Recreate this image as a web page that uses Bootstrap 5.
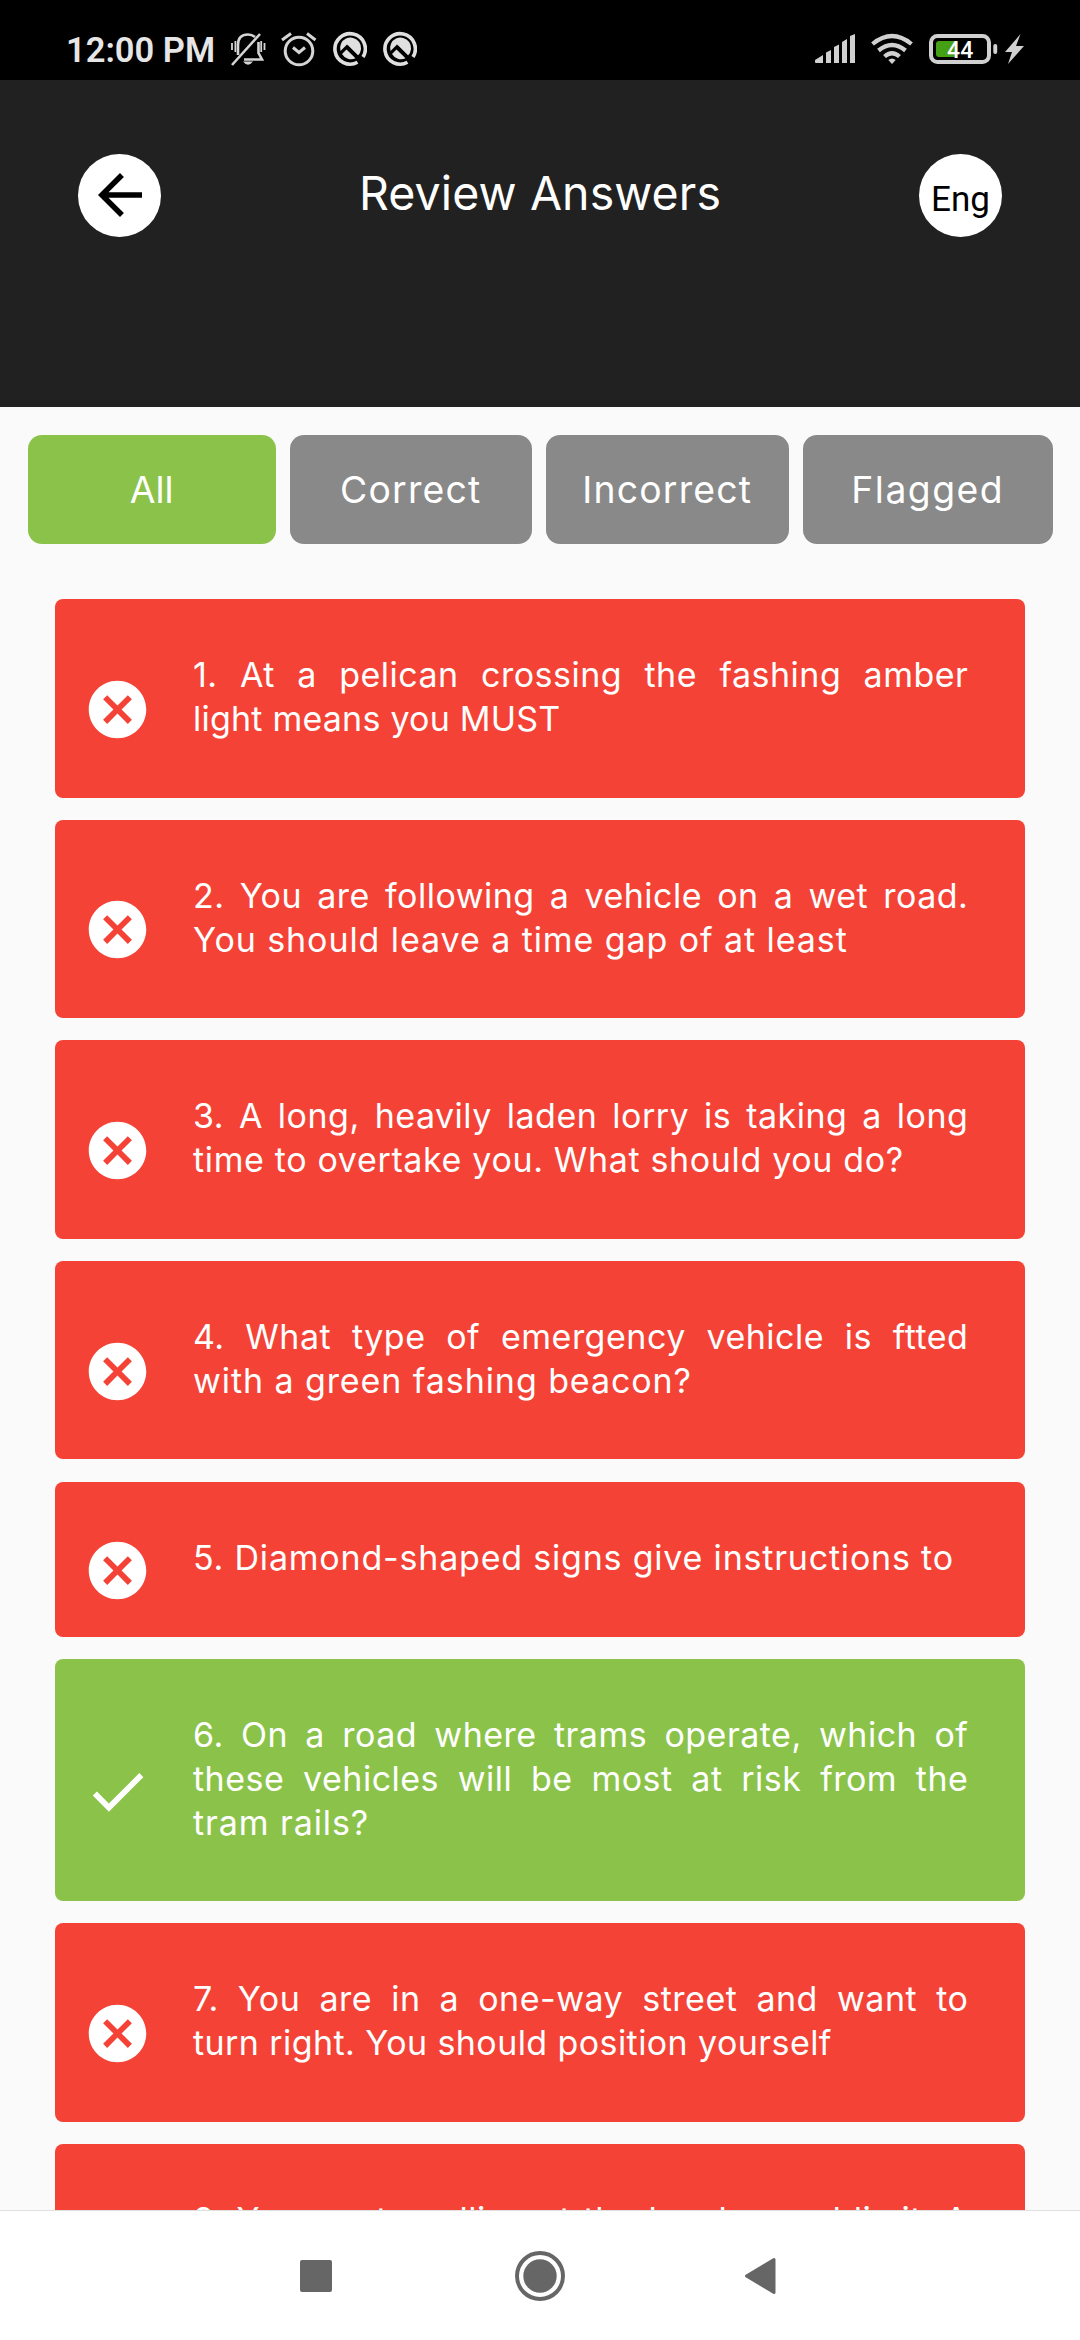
<!DOCTYPE html>
<html lang="en">
<head>
<meta charset="utf-8">
<meta name="viewport" content="width=device-width, initial-scale=1">
<title>Review Answers</title>
<link href="https://cdn.jsdelivr.net/npm/bootstrap@5.3.0/dist/css/bootstrap.min.css" rel="stylesheet">
<style>
  body { background: #fafafa; font-family: Inter, "Open Sans", sans-serif; height: 2340px; overflow: hidden; }
  .status-bar { height: 80px; background: #000; color: #e6e6e6; padding: 18px 56px 0 66px; font-family: Roboto, sans-serif; }
  .status-time { font-size: 34.5px; font-weight: 600; line-height: 40px; margin-top: 1px; width: 148px; white-space: nowrap; }
  .alarm { margin-left: 15px; }
  .app-header { height: 327px; background: #212121; padding: 73.5px 78px 0; }
  .round-btn { width: 83px; height: 83.5px; background: #fff; color: #000; font: 400 35px/83px Roboto, sans-serif; padding: 0; border: 0; }
  .round-btn.lang { padding-top: 4px; }
  .page-title { font-size: 46.5px; font-weight: 400; line-height: 56px; padding-top: 11px; letter-spacing: .1px; }
  .filters { padding: 28px 27px 0 28px; gap: 14px; }
  .filter-btn { width: 243px; height: 109px; border: 0; border-radius: 14px; background: #898989; color: #fff; font-size: 37.3px; line-height: 44px; letter-spacing: 1.2px; padding: 0; }
  .filter-btn:hover { background: #898989; color: #fff; }
  .filter-btn.chosen { background: #8bc34a; width: 248px; letter-spacing: 0; }
  .filter-btn.wide { width: 251px; letter-spacing: 1.5px; }
  .answers { flex: 1 1 0; min-height: 0; overflow: hidden; padding: 55.2px 55.4px 0 55px; gap: 22.1px; }
  .answer { flex: none; border-radius: 8px; background: #f44336; color: #fff; padding: 54px 56.2px 56.5px 28px; gap: 41px; }
  .answer.right { background: #8bc34a; }
  .answer svg { width: 69px; height: 69px; flex: none; margin-bottom: -24.3px; }
  .answer p { flex: 1; font-size: 34px; line-height: 44px; letter-spacing: .65px; }
  .answer span { display: block; white-space: nowrap; }
  .answer .fill, .answer span:not(:last-child) { text-align-last: justify; letter-spacing: .5px; }
  .answer .snug { letter-spacing: .22px; }
  .answer .soft { letter-spacing: .42px; }
  .answer .airy { letter-spacing: .8px; }
  .answer .loose { letter-spacing: .92px; }
  .answer .three-lines { min-height: 132px; }
  .sys-nav { height: 130px; background: #fff; border-top: 1px solid #e0e0e0; padding: 0 304px 0 300px; }
  .home-key { margin-left: 4px; }
</style>
</head>
<body class="d-flex flex-column">
  <div class="status-bar d-flex align-items-center flex-shrink-0">
    <div class="status-time">12:00 PM</div>
    <svg class="ms-3" width="36" height="36" viewBox="230 32 36 36" fill="none" stroke="#d5d5d5" stroke-width="2.6">
      <path d="M238 56V46Q238 35.500 248 35.500Q252 35.500 255 38M258.500 43V54L262 60.500H244" />
      <path d="M232 66 260 35"/><path d="M232 44V51M235.400 42V53M261.200 42V53M264.500 44V51" stroke-width="1.800"/>
      <path d="M243 62.500H253Q248 69 243 62.500Z" fill="#d5d5d5" stroke="none"/>
    </svg>
    <svg class="alarm" width="36" height="36" viewBox="281 32 36 36" fill="none" stroke="#d5d5d5" stroke-width="3">
      <circle cx="299" cy="52" r="13.800"/><path d="M293 48.500 299 53.500 305 48.500M282 41 291 34.500M307 34.500 315.500 41"/>
    </svg>
    <svg class="ms-3" width="34" height="36" viewBox="332 31 34 36" fill="none" stroke="#e0e0e0" stroke-width="3.600">
      <path d="M356.500 62.200A15.200 15.200 0 1 1 362 57"/>
      <path d="M339.500 51 346 44.500 357 55.500A10.500 10.500 0 1 0 339.500 51Z" fill="#e0e0e0" stroke="none"/>
      <path d="M341 54 345.500 49.500 354.500 58.300A10.500 10.500 0 0 1 341 54Z" fill="#e0e0e0" stroke="none"/>
      <path d="M346 46.500 361 61.500" stroke="#000" stroke-width="3"/>
    </svg>
    <svg class="ms-3" width="34" height="36" viewBox="332 31 34 36" fill="none" stroke="#e0e0e0" stroke-width="3.600">
      <path d="M356.500 62.200A15.200 15.200 0 1 1 362 57"/>
      <path d="M339.500 51 346 44.500 357 55.500A10.500 10.500 0 1 0 339.500 51Z" fill="#e0e0e0" stroke="none"/>
      <path d="M341 54 345.500 49.500 354.500 58.300A10.500 10.500 0 0 1 341 54Z" fill="#e0e0e0" stroke="none"/>
      <path d="M346 46.500 361 61.500" stroke="#000" stroke-width="3"/>
    </svg>
    <svg class="ms-auto" width="210" height="36" viewBox="814 31 210 36" fill="#d0d0d0">
      <path d="M815 60 823 55V63H816Q815 63 815 62ZM826 52.500 831 50V63H826ZM834 47 839 44.500V63H834ZM842 42 847 39V63H842ZM850 36 855 34V63H850Z"/>
      <g fill="none" stroke="#d0d0d0" stroke-width="4.200"><path d="M872.500 44Q892 28 911.500 44"/><path d="M878.500 50.500Q892 39.500 905.500 50.500"/><path d="M884.500 56.500Q892 50 899.500 56.500"/></g>
      <path d="M888.300 60Q892 57 895.700 60L892 64Z"/>
      <rect x="931" y="36" width="58" height="26" rx="6.500" fill="none" stroke="#d0d0d0" stroke-width="4"/>
      <path d="M939 41H957V57H939Q936 57 936 54V44Q936 41 939 41Z" fill="#46a016"/>
      <rect x="993.300" y="44" width="3.900" height="10" rx="1.900"/>
      <text x="960.200" y="57.700" text-anchor="middle" font-family="Roboto, sans-serif" font-size="23" font-weight="500" fill="#fff">44</text>
      <path d="M1020.500 34 1005 52H1012L1008 64 1024 46H1016Z"/>
    </svg>
  </div>

  <header class="app-header d-flex align-items-start justify-content-between flex-shrink-0">
    <button class="round-btn rounded-circle d-flex align-items-center justify-content-center" aria-label="Back">
      <svg width="66" height="66" viewBox="0 0 24 24"><path d="M20 11H7.830l5.590-5.590L12 4l-8 8 8 8 1.410-1.410L7.830 13H20v-2z"/></svg>
    </button>
    <h1 class="page-title mb-0 text-white">Review Answers</h1>
    <button class="round-btn lang rounded-circle">Eng</button>
  </header>

  <div class="filters d-flex flex-shrink-0">
    <button class="btn filter-btn chosen">All</button>
    <button class="btn filter-btn">Correct</button>
    <button class="btn filter-btn">Incorrect</button>
    <button class="btn filter-btn wide">Flagged</button>
  </div>

  <svg class="d-none">
    <symbol id="wrong" viewBox="0 0 24 24"><path fill="#fff" d="M12 2C6.470 2 2 6.470 2 12s4.470 10 10 10 10-4.470 10-10S17.530 2 12 2zm5 13.590L15.590 17 12 13.410 8.410 17 7 15.590 10.590 12 7 8.410 8.410 7 12 10.590 15.590 7 17 8.410 13.410 12 17 15.590z"/></symbol>
    <symbol id="tick" viewBox="0 0 24 24"><path fill="#fff" d="M9 16.170 4.830 12l-1.420 1.410L9 19 21 7l-1.410-1.410z"/></symbol>
  </svg>
  <main class="answers d-flex flex-column">
    <div class="answer d-flex align-items-center"><svg><use href="#wrong"/></svg><p class="mb-0"><span>1. At a pelican crossing the fashing amber</span> <span class="snug">light means you MUST</span></p></div>
    <div class="answer d-flex align-items-center"><svg><use href="#wrong"/></svg><p class="mb-0"><span>2. You are following a vehicle on a wet road.</span> <span class="loose">You should leave a time gap of at least</span></p></div>
    <div class="answer d-flex align-items-center"><svg><use href="#wrong"/></svg><p class="mb-0"><span>3. A long, heavily laden lorry is taking a long</span> <span>time to overtake you. What should you do?</span></p></div>
    <div class="answer d-flex align-items-center"><svg><use href="#wrong"/></svg><p class="mb-0"><span>4. What type of emergency vehicle is ftted</span> <span class="loose">with a green fashing beacon?</span></p></div>
    <div class="answer d-flex align-items-center"><svg><use href="#wrong"/></svg><p class="mb-0"><span class="airy">5. Diamond-shaped signs give instructions to</span></p></div>
    <div class="answer right d-flex align-items-center"><svg><use href="#tick"/></svg><p class="mb-0"><span>6. On a road where trams operate, which of</span> <span>these vehicles will be most at risk from the</span> <span class="loose">tram rails?</span></p></div>
    <div class="answer d-flex align-items-center"><svg><use href="#wrong"/></svg><p class="mb-0"><span>7. You are in a one-way street and want to</span> <span class="soft">turn right. You should position yourself</span></p></div>
    <div class="answer d-flex align-items-center"><svg><use href="#wrong"/></svg><p class="mb-0 three-lines"><span class="fill">8. You are travelling at the legal speed limit. A</span></p></div>
  </main>

  <nav class="sys-nav d-flex align-items-center justify-content-between flex-shrink-0">
    <svg width="32" height="32"><rect width="32" height="32" rx="2" fill="#666"/></svg>
    <svg class="home-key" width="50" height="50"><circle cx="25" cy="25" r="23" fill="none" stroke="#666" stroke-width="4"/><circle cx="25" cy="25" r="16.700" fill="#666"/></svg>
    <svg width="32" height="38"><path d="M2.500 19 30 2.500V35.500Z" fill="#666" stroke="#666" stroke-width="3" stroke-linejoin="round"/></svg>
  </nav>
<script src="https://cdn.jsdelivr.net/npm/bootstrap@5.3.0/dist/js/bootstrap.bundle.min.js"></script>
</body>
</html>
